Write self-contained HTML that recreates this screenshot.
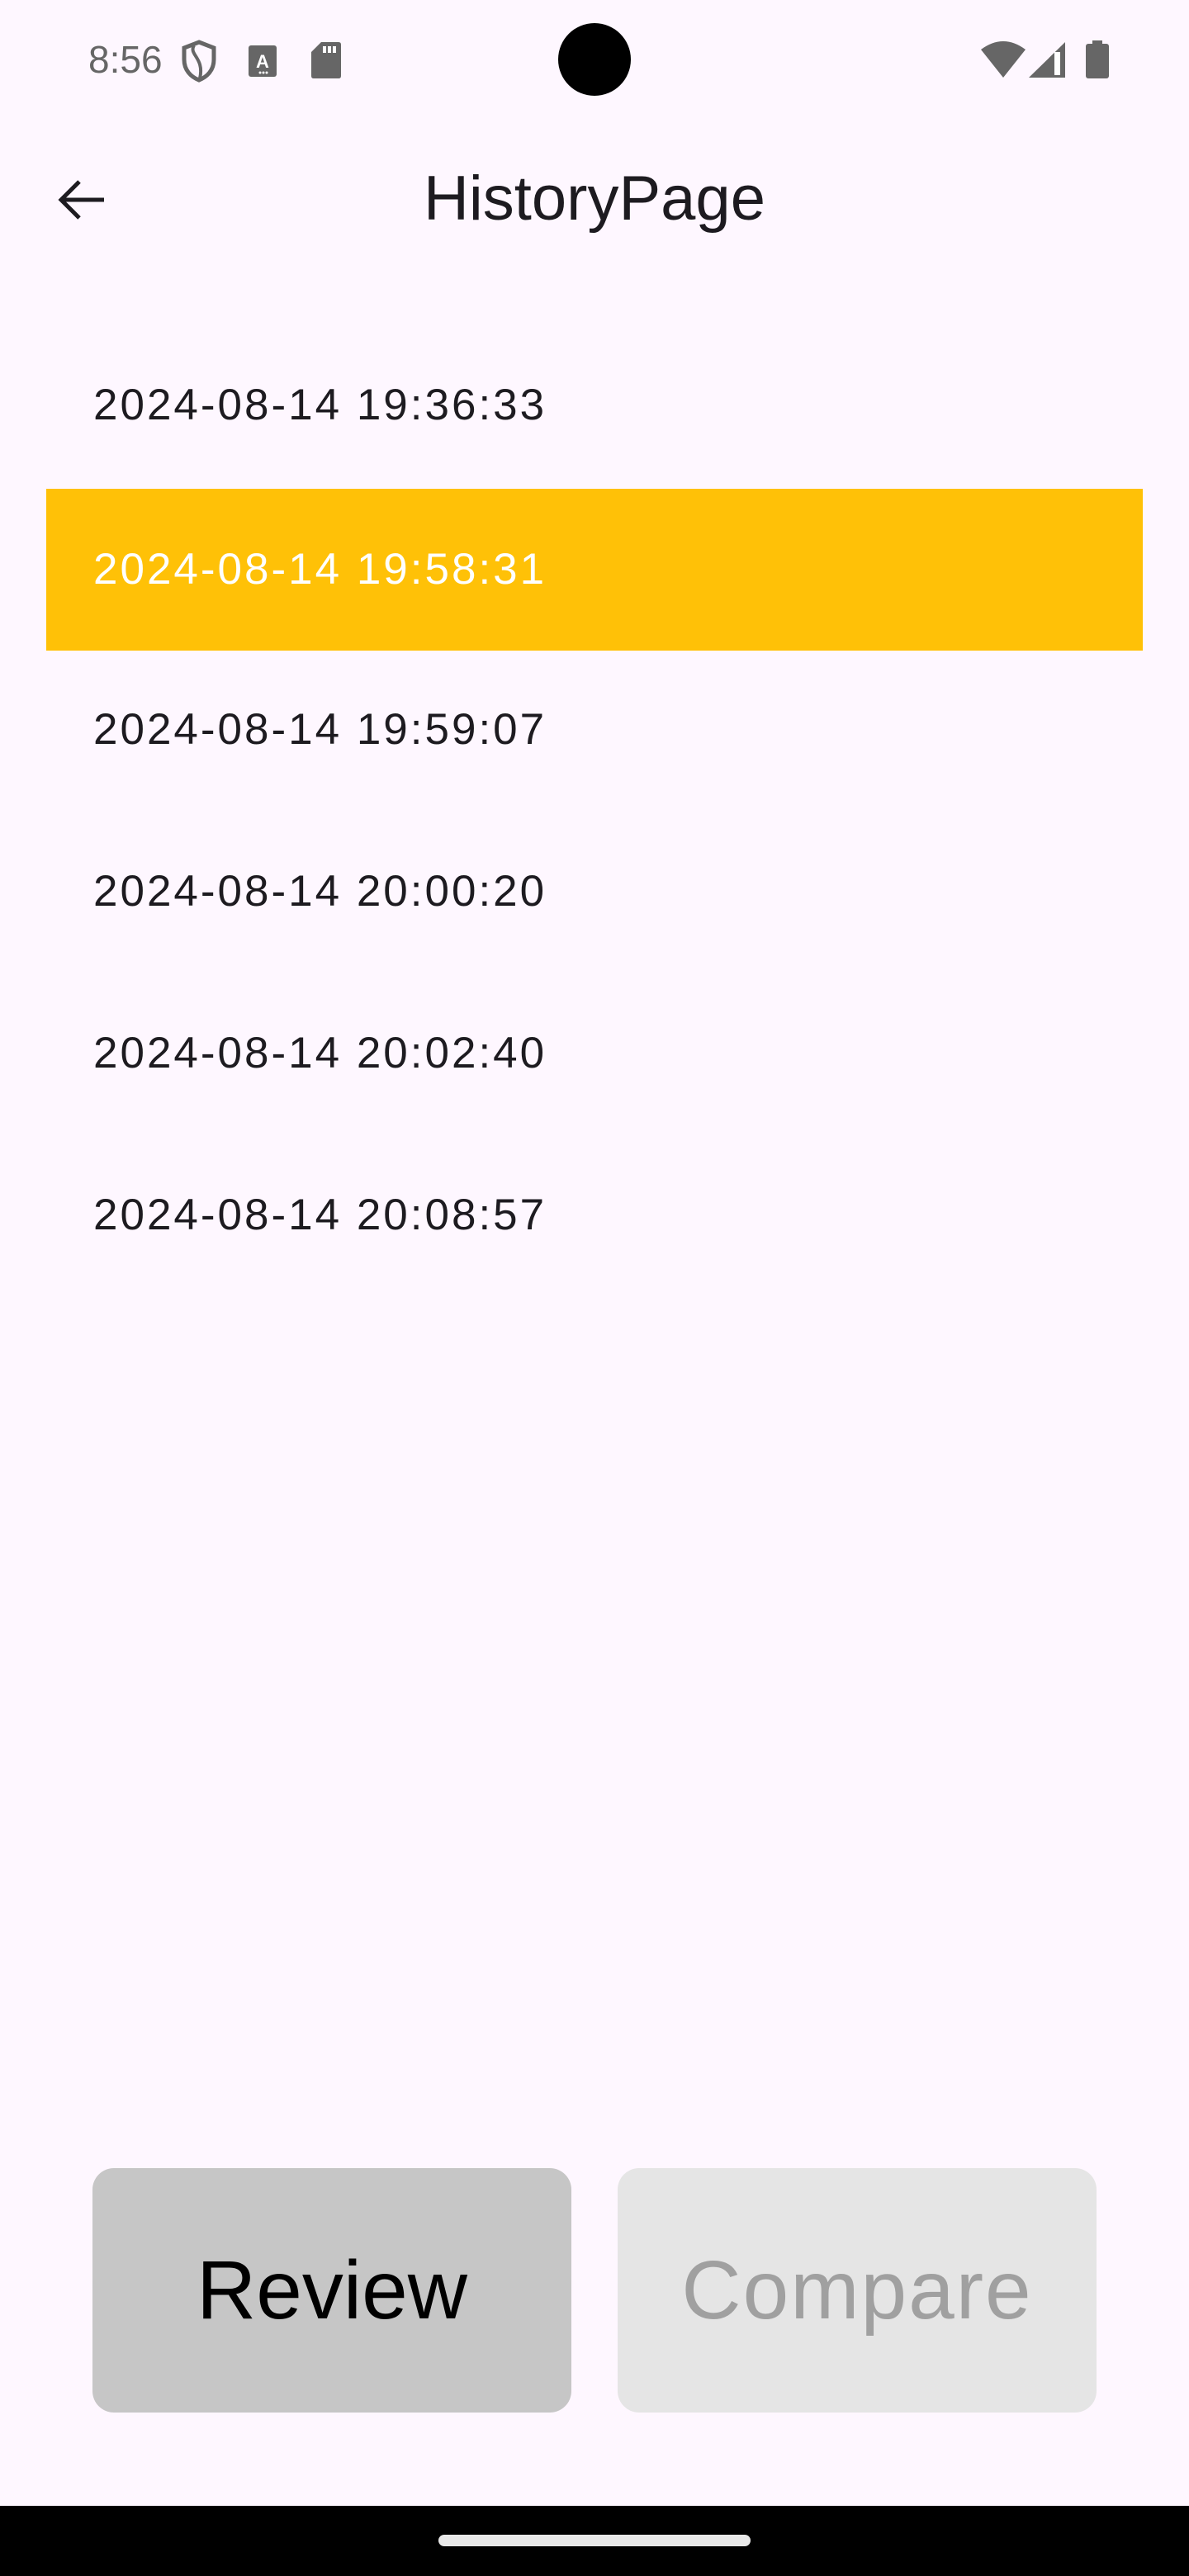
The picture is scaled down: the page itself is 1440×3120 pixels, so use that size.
<!DOCTYPE html>
<html><head><meta charset="utf-8"><style>
html,body{margin:0;padding:0}
body{width:1440px;height:3120px;background:#fef7ff;position:relative;overflow:hidden;font-family:"Liberation Sans",sans-serif}
.abs{position:absolute}
.item{position:absolute;left:56px;width:1328px;height:196px;line-height:196px;font-size:53px;letter-spacing:3px;color:#1d1b20;}
.item span{margin-left:57px}
.btn{position:absolute;top:2626px;height:296px;width:580px;border-radius:26px;text-align:center;line-height:296px;font-size:100px}
</style></head><body>
<div class="abs" style="left:107px;top:40px;font-size:46px;color:#666;line-height:64px">8:56</div>
<svg class="abs" style="left:218px;top:48px" width="46" height="52" viewBox="0 0 46 52"><path d="M23 3 L41 10 V24 C41 37 33 45 23 49 C13 45 5 37 5 24 V10 Z" fill="none" stroke="#666" stroke-width="5"/><path d="M17 7 C10 18 30 22 24 47" fill="none" stroke="#666" stroke-width="4"/></svg>
<svg class="abs" style="left:301px;top:55px" width="34" height="38" viewBox="0 0 34 38"><rect width="34" height="38" rx="3" fill="#666"/><text x="17" y="27" font-size="22" font-weight="bold" fill="#fff" text-anchor="middle" font-family="Liberation Sans">A</text><circle cx="14" cy="33" r="1.5" fill="#fff"/><circle cx="18" cy="33" r="1.5" fill="#fff"/><circle cx="22" cy="33" r="1.5" fill="#fff"/></svg>
<svg class="abs" style="left:377px;top:51px" width="36" height="44" viewBox="0 0 36 44"><path d="M12 0 H33 Q36 0 36 3 V41 Q36 44 33 44 H3 Q0 44 0 41 V12 Z" fill="#666"/><rect x="14" y="5" width="4" height="8" fill="#fff"/><rect x="20" y="5" width="4" height="8" fill="#fff"/><rect x="26" y="5" width="4" height="8" fill="#fff"/></svg>
<div class="abs" style="left:676px;top:28px;width:88px;height:88px;border-radius:50%;background:#000"></div>
<svg class="abs" style="left:1186px;top:48px" width="58" height="48" viewBox="0 0 58 48"><path d="M2 12 Q29 -8 56 12 L29 46 Z" fill="#666"/></svg>
<svg class="abs" style="left:1245px;top:50px" width="46" height="45" viewBox="0 0 46 45"><path d="M45 1 V44 H1 Z" fill="#666"/><rect x="32" y="13" width="7" height="28" fill="#fff"/></svg>
<svg class="abs" style="left:1315px;top:49px" width="28" height="46" viewBox="0 0 28 46"><rect x="8" y="0" width="12" height="6" fill="#666"/><rect x="0" y="4" width="28" height="42" rx="3" fill="#666"/></svg>
<svg class="abs" style="left:66px;top:214px" width="64" height="56" viewBox="0 0 64 56"><path d="M60 28 H10 M30 6 L8 28 L30 50" fill="none" stroke="#1d1b20" stroke-width="5"/></svg>
<div class="abs" style="left:0;width:1440px;top:194px;text-align:center;font-size:76px;color:#1d1b20;line-height:94px">HistoryPage</div>
<div class="item" style="top:393px"><span>2024-08-14 19:36:33</span></div>
<div class="item" style="top:592px;background:#ffc107;color:#fff"><span>2024-08-14 19:58:31</span></div>
<div class="item" style="top:786px"><span>2024-08-14 19:59:07</span></div>
<div class="item" style="top:982px"><span>2024-08-14 20:00:20</span></div>
<div class="item" style="top:1178px"><span>2024-08-14 20:02:40</span></div>
<div class="item" style="top:1374px"><span>2024-08-14 20:08:57</span></div>
<div class="btn" style="left:112px;background:#c6c6c6;color:#000">Review</div>
<div class="btn" style="left:748px;background:#e5e5e5;color:#a0a0a0;letter-spacing:2px">Compare</div>
<div class="abs" style="left:0;top:3035px;width:1440px;height:85px;background:#000"></div>
<div class="abs" style="left:531px;top:3070px;width:378px;height:14px;border-radius:7px;background:#e8e8e8"></div>
</body></html>
